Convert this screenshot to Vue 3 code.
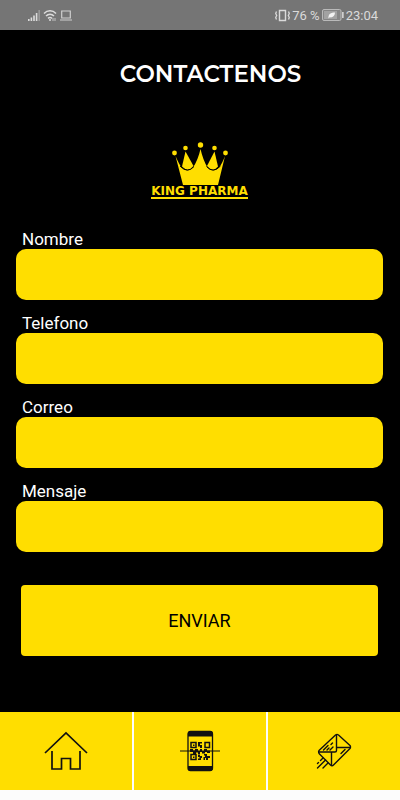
<template>
  <div class="screen">
    <div class="status-bar">
      <div class="status-group">
        <svg class="icon-signal" viewBox="0 0 12 12" aria-hidden="true">
          <path d="M0 12v-2h1.6v2zM2.6 12V8.5h1.6V12zM5.2 12V6.5h1.6V12zM7.8 12V4h1.6v8z" fill="#dcdcdc" />
          <path d="M10.4 12V1H12v11z" fill="#999" />
        </svg>
        <svg class="icon-wifi" viewBox="0 0 14 12" aria-hidden="true">
          <path d="M1 4.4C4.4.9 9.6.9 13 4.4M3 7c2.300-2.200 5.700-2.200 8 0M5 9.300c1.200-1 2.800-1 4 0" fill="none" stroke="#dcdcdc" stroke-width="1.500" />
          <circle cx="7" cy="11" r="1" fill="#dcdcdc" />
          <path d="M10 9v3M12 9v3" stroke="#c4c4c4" />
        </svg>
        <svg class="icon-laptop" viewBox="0 0 12 11" aria-hidden="true">
          <path d="M1.700 1h8.600v7H1.700zM0 10h12" fill="none" stroke="#cfcfcf" stroke-width="1.200" />
        </svg>
      </div>
      <div class="status-group status-right">
        <svg class="icon-vibrate" viewBox="0 0 15 13" aria-hidden="true">
          <path d="M4.500 1.500h6v10h-6z" fill="none" stroke="#dadada" stroke-width="1.400" />
          <path d="M1.500 2.500l-.8 2 1 2-1 2 .8 2M13.500 2.500l.8 2-1 2 1 2-.8 2" fill="none" stroke="#dadada" stroke-width="1.300" />
        </svg>
        <span class="battery-text">76 %</span>
        <svg class="icon-battery" viewBox="0 0 22 12" aria-hidden="true">
          <rect x=".5" y=".5" width="18.500" height="11" rx="1.500" fill="#858585" stroke="#bababa" />
          <path d="M2 2h13v8H2z" fill="#a2a2a2" />
          <path d="M6.500 9.500C6 5 9 3.500 13 3.500 13 7 10.500 9 7.700 8.300z" fill="#f2f2f2" />
          <path d="M20 3h1.700v6H20z" fill="#d0d0d0" />
        </svg>
        <span class="clock">23:04</span>
      </div>
    </div>

    <main class="content">
      <h1 class="title">CONTACTENOS</h1>

      <div class="logo">
        <svg class="crown" viewBox="0 0 56 44" aria-hidden="true">
          <g fill="#ffde00">
            <circle cx="2.500" cy="11" r="2.400" />
            <circle cx="13.500" cy="6" r="2.300" />
            <circle cx="28.500" cy="3" r="2.700" />
            <circle cx="42.500" cy="6" r="2.300" />
            <circle cx="53.500" cy="11" r="2.400" />
            <path d="M13.500 9.500L21.500 24Q16 31 10 24.500z" />
            <path d="M42.500 9.500L35 24Q41 31 46 24.500z" />
            <path d="M3.500 14Q7 22 9.500 25.500 15.500 31 21 25.500 26 18 28.500 7 31 18 35.500 25.500 41 31 47 25.500 50 22 53 14L46 43H11z" />
          </g>
          <path d="M8 24Q15.500 32 22 24.500M34.500 24.500Q41 32 48.500 24" fill="none" stroke="#000" stroke-width="1" />
        </svg>
        <span class="brand">KING PHARMA</span>
      </div>

      <form @submit.prevent>
        <div v-for="campo in campos" :key="campo.id" class="field">
          <label :for="campo.id">{{ campo.label }}</label>
          <input :id="campo.id" v-model="form[campo.id]" :type="campo.type" />
        </div>
        <button type="submit" class="btn-enviar">ENVIAR</button>
      </form>
    </main>

    <nav class="tabs">
      <a href="#inicio" aria-label="Inicio">
        <svg class="icon-home" viewBox="0 0 44 40" aria-hidden="true">
          <path d="M1 22L22 2 43 22M8 20V38H17.500V27.500H26.500V38H36V20" fill="none" stroke="#111" stroke-width="1.700" />
        </svg>
      </a>
      <a href="#qr" aria-label="Escanear QR">
        <svg class="icon-qr" viewBox="0 0 40 42" aria-hidden="true">
          <rect x="8" y="1.500" width="24.500" height="39" rx="2.500" fill="none" stroke="#111" stroke-width="1.300" />
          <path d="M8 6.500V3q0-2 2-2h20.500q2 0 2 2v3.500zM8 36v3q0 2 2 2h20.500q2 0 2-2v-3z" fill="#111" />
          <path d="M0 21h40" stroke="#111" stroke-width="1.200" />
          <path d="M11 12.500h5v5h-5zM11 24.500h5v5h-5zM25 12.500h4.500v5H25z" fill="none" stroke="#111" stroke-width="1.500" />
          <path d="M13 14.500h1.500V16H13zM13 26.500h1.500V28H13zM18 12h4v1.500h-2V15h2v3h-2v-1.500h-2zM10 19h3v1.500h2V19h3v2h2v-2h2v2h2v-2h3v1.500h3V23h-3v-1h-2v1.500h-3V22h-2v2h-2v-1.500h-2V24h-3v-2h-3zM18 24.500h2V26h2v2h-1v2h-3v-1.500h1.500V27H18zM24 24h3v2h3v2h-2v2h-2v-2h-1v2h-1.500v-3H25v-1.500h-1z" fill="#111" />
        </svg>
      </a>
      <a href="#contacto" aria-label="Contacto">
        <svg class="icon-mail" viewBox="0 0 36 36" aria-hidden="true">
          <g fill="none" stroke="#111" stroke-width="1.400" stroke-linecap="round" stroke-linejoin="round">
            <path d="M3 17.500L19.500 2Q21 .8 22.500 2L34 12.500Q35 14 34 15.500L17.500 32Q16 33.500 14.500 32L3.500 21Q2 19.500 3 17.500z" />
            <path d="M20.500 2V17.500Q20.500 19 19 19H3M20.500 14.500H34M15.500 19V32" />
            <path d="M7.500 17L12 12.500M11 17L13 15M15 11.500L16.500 10M14 17L17 14M29 16.500L25 20.500" />
            <path d="M7 25L4.500 27.500M2.500 29.500L1.500 30.500M9.500 27L1.500 35M12 30L7 35" />
          </g>
        </svg>
      </a>
    </nav>
  </div>
</template>

<script setup>
import { reactive } from 'vue';

const campos = [
  { id: 'nombre', label: 'Nombre', type: 'text' },
  { id: 'telefono', label: 'Telefono', type: 'tel' },
  { id: 'correo', label: 'Correo', type: 'email' },
  { id: 'mensaje', label: 'Mensaje', type: 'text' }
];

const form = reactive({
  nombre: '',
  telefono: '',
  correo: '',
  mensaje: ''
});
</script>

<style>
body {
  margin: 0;
  background: #fcfcfc;
}
</style>

<style scoped>
.screen {
  display: flex;
  flex-direction: column;
  min-height: 100vh;
  box-sizing: border-box;
  padding-bottom: 10px;
  font-family: Roboto, sans-serif;
}

.status-bar {
  display: flex;
  align-items: center;
  justify-content: space-between;
  height: 30px;
  padding: 0 22px 0 28px;
  background: #757575;
  color: #dadada;
  font-size: 13px;
}

.status-group {
  display: flex;
  align-items: center;
  gap: 3px;
}

.status-right {
  gap: 2px;
}

.icon-signal {
  width: 12px;
  height: 12px;
}

.icon-wifi {
  width: 14px;
  height: 12px;
}

.icon-laptop {
  width: 12px;
  height: 11px;
}

.icon-vibrate {
  width: 15px;
  height: 13px;
}

.icon-battery {
  width: 22px;
  height: 12px;
}

.content {
  flex: 1;
  padding: 28px 17px 56px 16px;
  background: #000;
}

.title {
  margin: 0;
  padding-left: 22px;
  color: #fff;
  font-family: Montserrat, Lato, sans-serif;
  font-size: 23px;
  font-weight: 600;
  line-height: 32px;
  text-align: center;
}

.logo {
  display: flex;
  flex-direction: column;
  align-items: center;
  margin: 52px 0 30px;
}

.crown {
  width: 56px;
  height: 44px;
}

.brand {
  border-bottom: 2px solid #ffde00;
  color: #ffde00;
  font-family: "DejaVu Sans", sans-serif;
  font-size: 12px;
  font-weight: 700;
  line-height: 11px;
}

.field {
  display: flex;
  flex-direction: column;
  margin-bottom: 13px;
}

.field label {
  padding-left: 6px;
  color: #fff;
  font-size: 17px;
  line-height: 20px;
}

.field input {
  height: 51px;
  box-sizing: border-box;
  padding: 0 12px;
  border: 0;
  border-radius: 10px;
  background: #ffde00;
  color: #000;
  font: inherit;
}

.btn-enviar {
  display: block;
  width: calc(100% - 10px);
  height: 71px;
  margin: 33px auto 0;
  border: 0;
  border-radius: 4px;
  background: #ffde00;
  color: #000;
  font-family: inherit;
  font-size: 18px;
}

.tabs {
  display: grid;
  grid-template-columns: repeat(3, 1fr);
  gap: 2px;
  background: #fcfcfc;
}

.tabs a {
  display: flex;
  align-items: center;
  justify-content: center;
  height: 78px;
  background: #ffde00;
}

.icon-home {
  width: 44px;
  height: 40px;
}

.icon-qr {
  width: 40px;
  height: 42px;
}

.icon-mail {
  width: 36px;
  height: 36px;
}
</style>
